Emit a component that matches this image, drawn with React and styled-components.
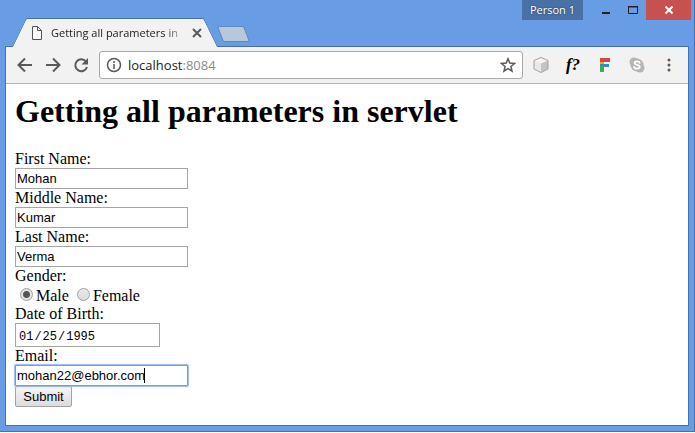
import { useState } from "react";
import styled, { createGlobalStyle } from "styled-components";

const GlobalStyle = createGlobalStyle`
  * {
    box-sizing: border-box;
  }
  body {
    margin: 0;
    background: #fff;
  }
  button {
    padding: 0;
    border: 0;
    background: none;
    color: inherit;
    font: inherit;
  }
  svg {
    display: block;
  }
`;

const Window = styled.div`
  display: flex;
  flex-direction: column;
  min-height: calc(100vh - 1px);
  border-right: 1px solid #4672b0;
  border-bottom: 1px solid #4672b0;
  background: #689de5;
`;

const TitleBar = styled.header`
  display: flex;
  justify-content: space-between;
  height: 46px;
`;

const TabStrip = styled.div`
  display: flex;
  align-items: flex-end;
  padding-left: 12px;
`;

const Tab = styled.div`
  position: relative;
  z-index: 1;
  display: flex;
  align-items: center;
  width: 206px;
  height: 29px;
  margin-bottom: -1px;
  padding: 0 15px 0 19px;
  font: 11px/28px "Open Sans", sans-serif;
  color: #222;
  &::before,
  &::after {
    content: "";
    position: absolute;
    z-index: -1;
    top: 0;
    bottom: 0;
    background: #f2f2f2;
    border-top: 1px solid #4571ae;
  }
  &::before {
    left: 7px;
    right: 90px;
    border-left: 1px solid #4571ae;
    border-top-left-radius: 2px;
    transform: skewX(-26deg);
  }
  &::after {
    left: 90px;
    right: 7px;
    border-right: 1px solid #4571ae;
    border-top-right-radius: 2px;
    transform: skewX(26deg);
  }
`;

const TabTitle = styled.span`
  flex: 1;
  margin: 0 8px;
  white-space: nowrap;
  mask-image: linear-gradient(to right, #000 86%, transparent 104%);
`;

const TabClose = styled.button`
  width: 12px;
  color: #5a5a5a;
`;

const NewTab = styled.button`
  width: 27px;
  height: 16px;
  margin: 0 0 4px 2px;
  border: 1px solid #5e88c2;
  border-radius: 2px;
  background: #b9c7da;
  transform: skewX(21deg);
`;

const Caption = styled.div`
  display: flex;
  height: 20px;
  padding-right: 3px;
`;

const Person = styled.button`
  width: 61px;
  margin-right: 9px;
  background: #4a71a6;
  color: #fff;
  font: 11px/20px "Open Sans", sans-serif;
  text-shadow: 0 0 2px #1d3557;
`;

const CaptionButton = styled.button`
  display: grid;
  place-items: center;
  width: ${(props) => (props.$close ? "45px" : "27px")};
  background: ${(props) => (props.$close ? "#c75050" : "none")};
`;

const Panel = styled.div`
  flex: 1;
  margin: 0 5px 5px;
  border: 1px solid #4571ae;
  background: #fff;
`;

const Toolbar = styled.nav`
  display: flex;
  align-items: center;
  height: 37px;
  padding: 0 3px 0 5px;
  border-bottom: 1px solid #b6b4b6;
  background: #f2f2f2;
`;

const ToolButton = styled.button`
  display: grid;
  place-items: center;
  width: ${(props) => (props.$wide ? "32px" : "28px")};
  height: 28px;
  color: #5a5a5a;
`;

const Omnibox = styled.div`
  flex: 1;
  display: flex;
  align-items: center;
  height: 28px;
  margin: 0 2px 0 4px;
  padding-left: 6px;
  border: 1px solid #a9a9a9;
  border-radius: 3px;
  background: #fff;
  color: #5a5a5a;
`;

const Address = styled.div`
  flex: 1;
  margin-left: 6px;
  font: 13px/20px "Open Sans", sans-serif;
  color: #8a8a8a;
  b {
    font-weight: 400;
    color: #222;
  }
`;

const Page = styled.main`
  padding: 9px;
  color: #000;
  font: 16px/18px "Liberation Serif", serif;
`;

const Heading = styled.h1`
  margin: 0 0 21px;
  font-size: 32px;
  line-height: 36px;
`;

const Form = styled.form`
  display: flex;
  flex-direction: column;
  align-items: flex-start;
`;

const Input = styled.input`
  display: block;
  width: 173px;
  height: 21px;
  margin: 0;
  padding: 1px;
  border: 1px solid #a5a5a5;
  border-radius: 0;
  outline: 0;
  background: #fff;
  color: #000;
  font: 13px/17px "Liberation Sans", sans-serif;
`;

const ActiveInput = styled(Input)`
  border-color: #6f9be0;
  border-radius: 1px;
  box-shadow: 0 0 1px 1px #9bbcee;
`;

const DateInput = styled(Input)`
  width: 145px;
  height: 24px;
  padding: 3px 2px 0;
  font: 12px/18px "Liberation Mono", monospace;
  &::-webkit-calendar-picker-indicator {
    display: none;
  }
`;

const ActiveField = styled.div`
  position: relative;
`;

const Caret = styled.span`
  position: absolute;
  top: 3px;
  left: 129px;
  width: 1px;
  height: 15px;
  background: #000;
`;

const RadioRow = styled.div`
  display: flex;
  align-items: flex-end;
  gap: 8px;
  height: 20px;
  padding-left: 5px;
`;

const RadioLabel = styled.label`
  display: flex;
  align-items: center;
  gap: 3px;
`;

const Radio = styled.input`
  appearance: none;
  width: 13px;
  height: 13px;
  margin: 0 0 3px;
  border: 1px solid #a0a0a0;
  border-radius: 50%;
  background: linear-gradient(#e9e9e9, #dcdcdc);
  &:checked {
    background: radial-gradient(circle, #555 0 3px, #e2e2e2 4px);
  }
`;

const Submit = styled.button`
  width: 57px;
  height: 21px;
  border: 1px solid #a2a2a2;
  border-radius: 2px;
  background: linear-gradient(#f6f6f6, #dcdcdc);
  font: 13px/17px "Liberation Sans", sans-serif;
`;

const Stroke = ({ size = 16, width = 2, children }) => (
  <svg
    width={size}
    height={size}
    viewBox={`0 0 ${size} ${size}`}
    fill="none"
    stroke="currentColor"
    strokeWidth={width}>
    {children}
  </svg>
);

const CubeIcon = () => (
  <svg width="18" height="18" viewBox="0 0 18 18" strokeLinejoin="round">
    <path d="M9 1.500 16 4.500 9 7.500 2 4.500Z" fill="#f4f4f4" />
    <path d="M2 4.500 9 7.500V16.500L2 13Z" fill="#e8e8e8" />
    <path d="M16 4.500 9 7.500V16.500L16 13Z" fill="#c4c4c4" />
    <path d="M9 1.500 16 4.500V13L9 16.500 2 13V4.500Z" fill="none" stroke="#a2a2a2" />
  </svg>
);

const FunctionIcon = styled.span`
  color: #000;
  font: italic bold 17px/20px "Liberation Serif", serif;
`;

const BlocksIcon = () => (
  <svg width="16" height="16" viewBox="0 0 16 16">
    <path d="M3 1h10v4H3z" fill="#d9453a" />
    <path d="M3 5h4v2H3z" fill="#f0a92e" />
    <path d="M3 7h9v3H3z" fill="#3a86d0" />
    <path d="M3 9h4v6H3z" fill="#35b04a" />
  </svg>
);

const ChatIcon = () => (
  <svg width="16" height="16" viewBox="0 0 16 16">
    <circle cx="5" cy="5" r="4.500" fill="#b5b5b5" />
    <circle cx="11" cy="11" r="4.500" fill="#b5b5b5" />
    <circle cx="8" cy="8" r="6.500" fill="#b5b5b5" />
    <path
      d="M10.700 5.800C10.300 4 5.500 3.800 5.500 6.100c0 2.200 5.200 1.300 5.200 3.700 0 2.400-5.100 2.300-5.500.2"
      fill="none"
      stroke="#fff"
      strokeWidth="1.800"
      strokeLinecap="round"
    />
  </svg>
);

function Field({ id, label, value }) {
  return (
    <>
      <label htmlFor={id}>{label}</label>
      <Input id={id} name={id} defaultValue={value} />
    </>
  );
}

export default function App() {
  const [gender, setGender] = useState("male");

  return (
    <>
      <GlobalStyle />
      <Window>
        <TitleBar>
          <TabStrip>
            <Tab>
              <svg width="12" height="14" viewBox="0 0 12 14" fill="#fff" stroke="#555">
                <path d="M1.500.5h5l4 4v9h-9zM6.500.5v4h4" />
              </svg>
              <TabTitle>Getting all parameters in</TabTitle>
              <TabClose aria-label="Close tab">
                <Stroke size={12}>
                  <path d="m2 2 8 8M10 2 2 10" />
                </Stroke>
              </TabClose>
            </Tab>
            <NewTab aria-label="New tab" />
          </TabStrip>
          <Caption>
            <Person>Person 1</Person>
            <CaptionButton aria-label="Minimize">
              <Stroke size={10}>
                <path d="M1 8h8" stroke="#222" />
              </Stroke>
            </CaptionButton>
            <CaptionButton aria-label="Maximize">
              <svg width="10" height="8" viewBox="0 0 10 8" fill="none" stroke="#222">
                <path d="M.5 1v6.500h9V1M0 1h10" />
                <path d="M0 .5h10" />
              </svg>
            </CaptionButton>
            <CaptionButton $close aria-label="Close">
              <Stroke size={8}>
                <path d="m.5.5 7 7M7.500.5l-7 7" stroke="#fff" />
              </Stroke>
            </CaptionButton>
          </Caption>
        </TitleBar>

        <Panel>
          <Toolbar>
            <ToolButton aria-label="Back">
              <Stroke>
                <path d="M15 8H2M8 1.500 1.500 8 8 14.500" />
              </Stroke>
            </ToolButton>
            <ToolButton aria-label="Forward">
              <Stroke>
                <path d="M1 8h13M8 1.500 14.500 8 8 14.500" />
              </Stroke>
            </ToolButton>
            <ToolButton aria-label="Reload">
              <Stroke>
                <path d="M13 4.500A6 6 0 1 0 14 10" />
                <path d="M15 1v6.500H8.500z" fill="currentColor" stroke="none" />
              </Stroke>
            </ToolButton>
            <Omnibox>
              <Stroke width={1.5}>
                <circle cx="8" cy="8" r="6.500" />
                <path d="M8 7v5M8 4v2" />
              </Stroke>
              <Address>
                <b>localhost</b>:8084
              </Address>
              <ToolButton aria-label="Bookmark this page">
                <Stroke width={1.5}>
                  <path d="m8 1.800 1.800 4.300 4.700.4-3.600 3 1.100 4.600L8 11.700l-4 2.400 1.100-4.600-3.600-3 4.700-.4z" />
                </Stroke>
              </ToolButton>
            </Omnibox>
            <ToolButton $wide aria-label="Cube">
              <CubeIcon />
            </ToolButton>
            <ToolButton $wide>
              <FunctionIcon>f?</FunctionIcon>
            </ToolButton>
            <ToolButton $wide aria-label="Blocks">
              <BlocksIcon />
            </ToolButton>
            <ToolButton $wide aria-label="Chat">
              <ChatIcon />
            </ToolButton>
            <ToolButton $wide aria-label="Menu">
              <svg width="4" height="14" viewBox="0 0 4 14" fill="currentColor">
                <circle cx="2" cy="2" r="1.500" />
                <circle cx="2" cy="7" r="1.500" />
                <circle cx="2" cy="12" r="1.500" />
              </svg>
            </ToolButton>
          </Toolbar>

          <Page>
            <Heading>Getting all parameters in servlet</Heading>
            <Form onSubmit={(e) => e.preventDefault()}>
              <Field id="fname" label="First Name:" value="Mohan" />
              <Field id="mname" label="Middle Name:" value="Kumar" />
              <Field id="lname" label="Last Name:" value="Verma" />
              <span id="gender">Gender:</span>
              <RadioRow role="radiogroup" aria-labelledby="gender">
                <RadioLabel>
                  <Radio
                    type="radio"
                    name="gender"
                    checked={gender === "male"}
                    onChange={() => setGender("male")}
                  />
                  Male
                </RadioLabel>
                <RadioLabel>
                  <Radio
                    type="radio"
                    name="gender"
                    checked={gender === "female"}
                    onChange={() => setGender("female")}
                  />
                  Female
                </RadioLabel>
              </RadioRow>
              <label htmlFor="dob">Date of Birth:</label>
              <DateInput id="dob" name="dob" type="date" defaultValue="1995-01-25" />
              <label htmlFor="email">Email:</label>
              <ActiveField>
                <ActiveInput id="email" name="email" defaultValue="mohan22@ebhor.com" />
                <Caret />
              </ActiveField>
              <Submit type="submit">Submit</Submit>
            </Form>
          </Page>
        </Panel>
      </Window>
    </>
  );
}
